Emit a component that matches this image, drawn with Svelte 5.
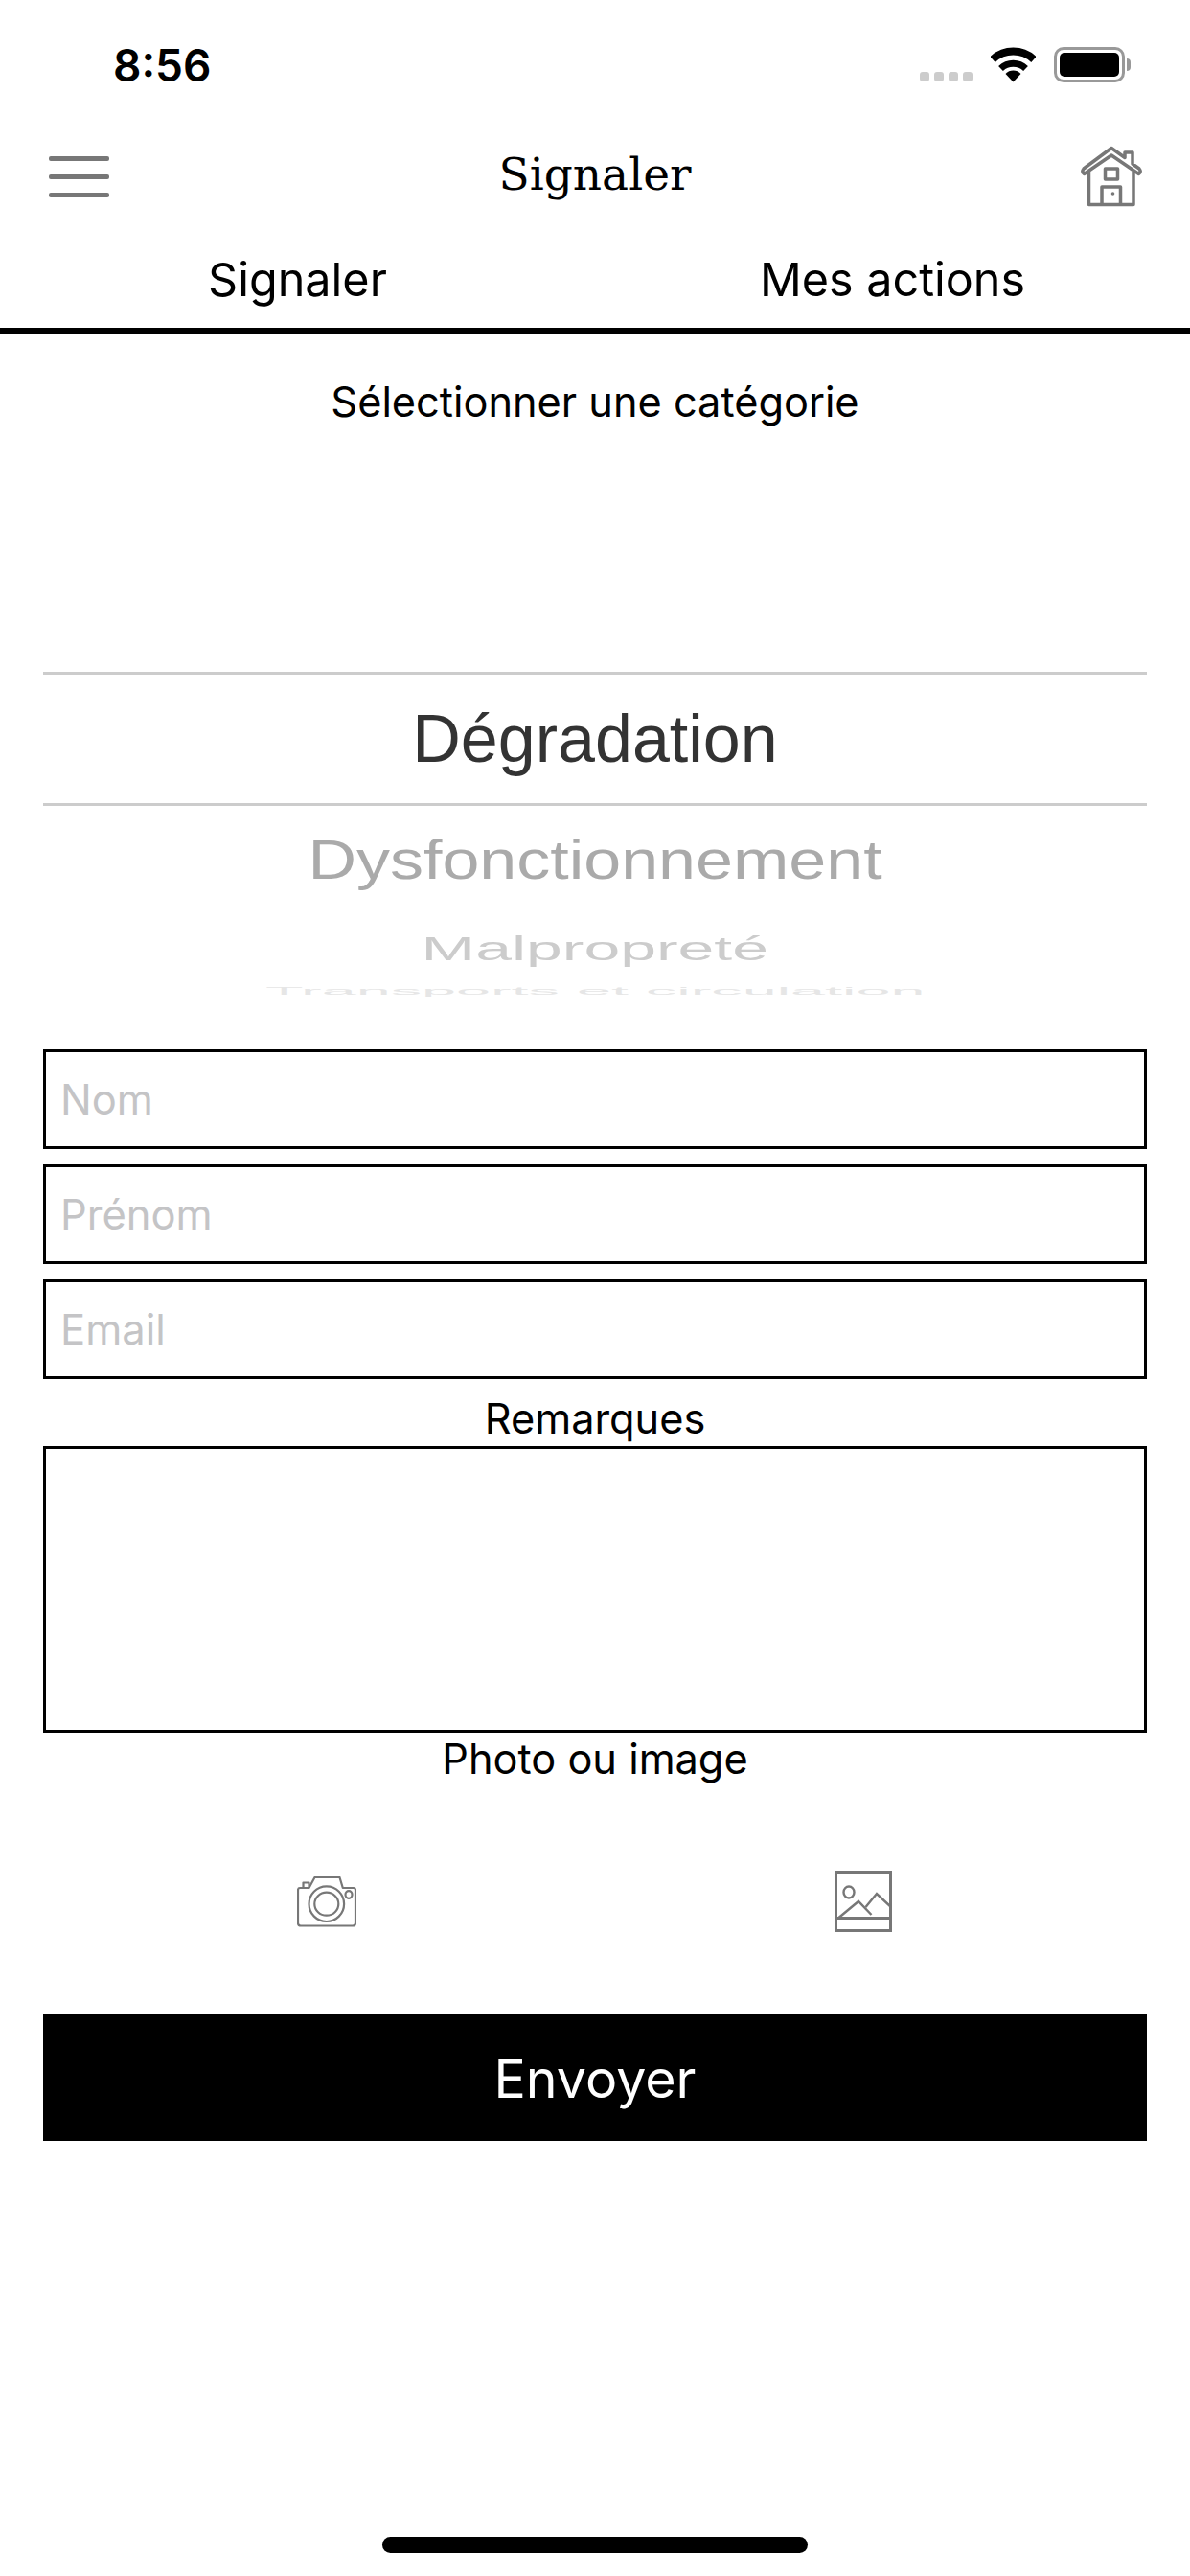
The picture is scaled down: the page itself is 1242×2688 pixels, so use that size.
<script>
  const fields = ['Nom', 'Prénom', 'Email'];
</script>

<div class="screen">
  <div class="status">
    <span class="time">8:56</span>
    <div class="status-icons">
      <div class="dots"><i></i><i></i><i></i><i></i></div>
      <svg class="wifi" width="47" height="37" viewBox="0 0 47 37">
        <path d="M2 13A31.5 31.5 0 0 1 45 13" fill="none" stroke="#000" stroke-width="8" />
        <path d="M10.5 22.5A19 19 0 0 1 36.5 22.5" fill="none" stroke="#000" stroke-width="7" />
        <path d="M23.5 36.5L15.5 28A11 11 0 0 1 31.5 28Z" fill="#000" />
      </svg>
      <div class="battery"><div class="battery-fill"></div></div>
    </div>
  </div>

  <header class="topbar">
    <div class="burger"><i></i><i></i><i></i></div>
    <h1>Signaler</h1>
    <svg class="house" width="64" height="64" viewBox="0 0 64 64" fill="none" stroke="#777" stroke-width="3.5" stroke-linejoin="round">
      <path d="M32 2.500L46 12.500V7H54V19L61 24Q63.500 27 60.500 29.500L32 10L3.500 29.500Q0.500 27 3 24Z" />
      <path d="M8.500 27V61.500H55V27" />
      <rect x="25.500" y="24" width="13" height="11" />
      <path d="M22 61.500V43H41.500V61.500" />
      <circle cx="33.500" cy="50" r="1.800" fill="#777" stroke="none" />
    </svg>
  </header>

  <nav class="tabs">
    <span>Signaler</span>
    <span>Mes actions</span>
  </nav>

  <p class="pick-label">Sélectionner une catégorie</p>

  <div class="wheel">
    <div class="row selected"><span>Dégradation</span></div>
    <div class="row r1"><span>Dysfonctionnement</span></div>
    <div class="row r2"><span>Malpropreté</span></div>
    <div class="row r3"><span>Transports et circulation</span></div>
  </div>

  <form class="form">
    {#each fields as field}
      <input class="field" type="text" placeholder={field} />
    {/each}
    <div class="caption remarks">Remarques</div>
    <textarea class="notes"></textarea>
    <div class="caption photo">Photo ou image</div>

    <div class="pickers">
      <svg width="62" height="53" viewBox="0 0 62 53" fill="none" stroke="#777" stroke-width="2.200" stroke-linejoin="round">
        <path d="M6.500 12V6.500H12.500V12" />
        <path d="M3 12H12.500L18.500 1H44.500L47.800 12H59Q61 12 61 14.500V48.500Q61 51.500 58 51.500H4Q1 51.500 1 48.500V14.500Q1 12 3 12Z" />
        <ellipse cx="30.800" cy="28.700" rx="18.300" ry="18.300" />
        <ellipse cx="30.800" cy="28.700" rx="12.500" ry="12" />
        <ellipse cx="54" cy="19" rx="3.500" ry="3.800" />
      </svg>
      <svg width="60" height="64" viewBox="0 0 60 64" fill="none" stroke="#777" stroke-width="2.400">
        <rect x="1.500" y="1.500" width="57" height="61" stroke-width="3" />
        <path d="M1 49.500H59" stroke-width="3" />
        <ellipse cx="15" cy="22.500" rx="5.500" ry="6" />
        <path d="M4.500 49L25 32L38.500 46" />
        <path d="M32.500 38L44 24L59 38" />
      </svg>
    </div>

    <button class="send" type="button">Envoyer</button>
  </form>

  <div class="home-bar"></div>
</div>

<style>
  :global(body) {
    background: #fff;
  }

  .screen {
    width: 1242px;
    height: 2688px;
    background: #fff;
    display: flex;
    flex-direction: column;
    position: relative;
    font-family: Inter, "Liberation Sans", sans-serif;
    color: #000;
    overflow: hidden;
  }

  .status {
    height: 132px;
    box-sizing: border-box;
    padding: 40px 68px 0 118px;
    display: flex;
    justify-content: space-between;
    align-items: flex-start;
  }

  .time {
    font-size: 46px;
    font-weight: 600;
    line-height: 56px;
  }

  .status-icons {
    display: flex;
    align-items: flex-end;
    padding-top: 9px;
    height: 37px;
  }

  .dots {
    display: flex;
    gap: 5px;
    margin-right: 19px;
    margin-bottom: 1px;
  }

  .dots i {
    width: 10px;
    height: 10px;
    border-radius: 3px;
    background: #ccc;
  }

  .wifi {
    margin-right: 19px;
  }

  .battery {
    width: 74px;
    height: 37px;
    box-sizing: border-box;
    border: 3px solid #999;
    border-radius: 10px;
    padding: 3px;
    position: relative;
  }

  .battery::after {
    content: '';
    position: absolute;
    right: -9px;
    top: 9px;
    width: 4px;
    height: 13px;
    background: #999;
    border-radius: 0 5px 5px 0;
  }

  .battery-fill {
    width: 100%;
    height: 100%;
    background: #000;
    border-radius: 5px;
  }

  .topbar {
    height: 100px;
    box-sizing: border-box;
    padding: 20px 50px 0 51px;
    display: flex;
    justify-content: space-between;
    align-items: flex-start;
  }

  .burger {
    width: 63px;
    display: flex;
    flex-direction: column;
    gap: 14px;
    padding-top: 11px;
  }

  .burger i {
    display: block;
    height: 5px;
    border-radius: 2px;
    background: #777;
  }

  h1 {
    margin: 0;
    font-family: "DejaVu Serif", "Liberation Serif", serif;
    font-weight: 400;
    font-size: 47px;
    line-height: 60px;
  }

  .tabs {
    display: grid;
    grid-template-columns: 1fr 1fr;
    height: 116px;
    box-sizing: border-box;
    padding-top: 30px;
    border-bottom: 6px solid #000;
    text-align: center;
    font-size: 48.500px;
    line-height: 60px;
  }

  .pick-label {
    margin: 0;
    padding-top: 44px;
    text-align: center;
    font-size: 43.300px;
    line-height: 54px;
  }

  .wheel {
    margin-top: 258px;
    margin-left: 45px;
    margin-right: 45px;
    font-family: "Liberation Sans", Arial, sans-serif;
    font-size: 70px;
    text-align: center;
    white-space: nowrap;
  }

  .row {
    display: flex;
    align-items: center;
    justify-content: center;
  }

  .row span {
    display: block;
    line-height: 1;
  }

  .selected {
    height: 140px;
    box-sizing: border-box;
    border-top: 3px solid #ccc;
    border-bottom: 3px solid #ccc;
    color: #333;
    margin-top: -3px;
  }

  .r1 {
    height: 112px;
    color: #aaa;
  }

  .r1 span {
    transform: scaleY(0.82);
  }

  .r2 {
    height: 73px;
    color: #ccc;
  }

  .r2 span {
    transform: scale(0.97, 0.5);
  }

  .r3 {
    height: 15px;
    color: #e6e6e6;
  }

  .r3 span {
    transform: scale(0.925, 0.16);
  }

  .form {
    margin: 54px 45px 0;
    display: flex;
    flex-direction: column;
  }

  .field {
    height: 104px;
    box-sizing: border-box;
    border: 3px solid #000;
    border-radius: 0;
    padding: 0 15px;
    margin: 0 0 16px;
    font-family: inherit;
    font-size: 43.500px;
    background: #fff;
    outline: none;
  }

  .field::placeholder {
    color: #c4c4c6;
    opacity: 1;
  }

  .caption {
    text-align: center;
    font-size: 43.300px;
    line-height: 54px;
  }

  .remarks {
    margin-top: -2px;
    height: 56px;
  }

  .notes {
    display: block;
    height: 299px;
    box-sizing: border-box;
    border: 3px solid #000;
    border-radius: 0;
    resize: none;
    outline: none;
    margin: 0;
  }

  .pickers {
    display: flex;
    justify-content: space-between;
    align-items: center;
    padding: 0 266px 0 265px;
    margin-top: 90px;
    height: 64px;
  }

  .send {
    margin-top: 86px;
    height: 132px;
    border: 0;
    border-radius: 0;
    background: #000;
    color: #fff;
    font-family: inherit;
    font-size: 55.500px;
  }

  .home-bar {
    position: absolute;
    left: 399px;
    bottom: 24px;
    width: 444px;
    height: 17px;
    border-radius: 9px;
    background: #000;
  }
</style>
